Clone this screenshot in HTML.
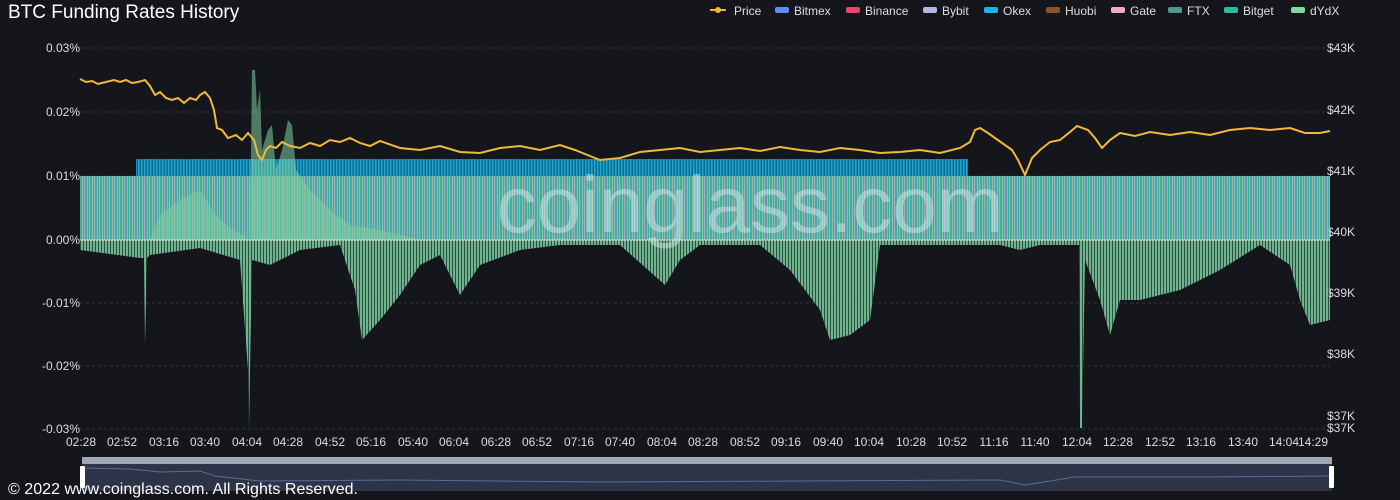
<!DOCTYPE html>
<html><head><style>
html,body{margin:0;padding:0;background:#15161b;width:1400px;height:500px;overflow:hidden;font-family:"Liberation Sans",sans-serif;}
svg{display:block}
</style></head><body>
<svg width="1400" height="500" xmlns="http://www.w3.org/2000/svg" font-family="Liberation Sans, sans-serif">
<defs>
<pattern id="st" width="3" height="10" patternUnits="userSpaceOnUse"><rect width="3" height="10" fill="#2e5a4a"/><rect width="2" height="10" fill="#7fd0a0"/></pattern>
<pattern id="bl" width="3" height="10" patternUnits="userSpaceOnUse"><rect width="3" height="10" fill="#0e6a8c"/><rect width="1.5" height="10" fill="#1aa6d0"/></pattern>
<pattern id="pos" width="5" height="10" patternUnits="userSpaceOnUse"><rect width="5" height="10" fill="#4fbdb0"/><rect x="2" width="1" height="10" fill="#8ad8b0"/><rect x="4" width="1" height="10" fill="#b9b6e0"/></pattern>
</defs>
<rect width="1400" height="500" fill="#15161b"/>
<text x="8" y="18" fill="#fff" font-size="19">BTC Funding Rates History</text>
<g font-size="12" fill="#ddd">
<circle cx="718" cy="10" r="3" fill="#f0b93a"/><rect x="710" y="9" width="16" height="2" fill="#f0b93a"/><text x="734" y="15">Price</text>
<rect x="775" y="7" width="14" height="6" rx="2" fill="#5b8ff0"/><text x="794" y="15">Bitmex</text>
<rect x="846" y="7" width="14" height="6" rx="2" fill="#e8466a"/><text x="865" y="15">Binance</text>
<rect x="923" y="7" width="14" height="6" rx="2" fill="#b8b4e8"/><text x="942" y="15">Bybit</text>
<rect x="984" y="7" width="14" height="6" rx="2" fill="#14b8e8"/><text x="1003" y="15">Okex</text>
<rect x="1046" y="7" width="14" height="6" rx="2" fill="#8a532a"/><text x="1065" y="15">Huobi</text>
<rect x="1111" y="7" width="14" height="6" rx="2" fill="#f0aac8"/><text x="1130" y="15">Gate</text>
<rect x="1168" y="7" width="14" height="6" rx="2" fill="#4e9a8a"/><text x="1187" y="15">FTX</text>
<rect x="1224" y="7" width="14" height="6" rx="2" fill="#20c0a0"/><text x="1243" y="15">Bitget</text>
<rect x="1291" y="7" width="14" height="6" rx="2" fill="#80d8a0"/><text x="1310" y="15">dYdX</text>
</g>
<g stroke="#33343a" stroke-dasharray="3,3" stroke-width="1">
<line x1="80" y1="48" x2="1330" y2="48"/><line x1="80" y1="112" x2="1330" y2="112"/><line x1="80" y1="176" x2="1330" y2="176"/><line x1="80" y1="303" x2="1330" y2="303"/><line x1="80" y1="366" x2="1330" y2="366"/><line x1="80" y1="429" x2="1330" y2="429"/>
</g>
<g font-size="12" fill="#ddd" text-anchor="end">
<text x="80" y="52">0.03%</text><text x="80" y="116">0.02%</text><text x="80" y="180">0.01%</text><text x="80" y="244">0.00%</text><text x="80" y="307">-0.01%</text><text x="80" y="370">-0.02%</text><text x="80" y="433">-0.03%</text>
</g>
<g font-size="12" fill="#ddd">
<text x="1327" y="52">$43K</text><text x="1327" y="114">$42K</text><text x="1327" y="175">$41K</text><text x="1327" y="236">$40K</text><text x="1327" y="297">$39K</text><text x="1327" y="358">$38K</text><text x="1327" y="420">$37K</text><text x="1327" y="432">$37K</text>
</g>
<rect x="136" y="159" width="832" height="17" fill="url(#bl)"/>
<rect x="80" y="176" width="1250" height="64" fill="url(#pos)" opacity="0.9"/>
<path d="M150,240 L160,215 L180,200 L200,190 L215,215 L230,228 L250,240Z" fill="#7fd0a0" opacity="0.5"/>
<path d="M250,240 L252,70 L255,70 L257,110 L260,90 L262,150 L268,130 L272,125 L276,170 L282,150 L288,120 L292,125 L296,170 L310,190 L330,210 L350,225 L380,230 L420,240Z" fill="#7fd0a0" opacity="0.55"/>
<polygon fill="url(#st)" opacity="0.85" points="80,240 80,250 140,258 144,258 145,345 147,258 150,255 200,248 240,260 248,370 249,430 250,370 252,260 270,265 300,250 340,245 355,290 362,340 380,320 400,295 420,265 440,255 460,295 480,265 520,250 560,245 620,245 665,285 680,260 700,245 760,245 790,270 820,310 830,340 850,335 870,320 880,245 1000,245 1020,250 1040,245 1079,245 1080,428 1082,428 1085,260 1100,300 1110,335 1120,300 1140,300 1180,290 1220,270 1260,245 1290,265 1300,300 1310,325 1330,320 1330,240"/>
<line x1="80" y1="240" x2="1330" y2="240" stroke="#ddd" stroke-width="1"/>
<text x="750" y="232" text-anchor="middle" font-size="80" fill="#e0eeee" opacity="0.45">coinglass.com</text>
<polyline fill="none" stroke="#f0b93a" stroke-width="2" points="80,79 86,82 92,81 98,84 106,82 114,80 120,82 126,80 132,83 138,82 145,80 150,86 155,95 160,92 166,98 172,100 178,98 184,103 190,98 196,100 200,95 205,92 210,98 214,110 217,128 222,130 228,138 236,135 242,140 248,133 254,140 258,155 262,160 266,150 270,146 276,148 282,142 290,146 300,148 310,143 320,146 330,140 340,142 350,138 360,143 370,146 380,141 400,148 420,150 440,146 460,152 480,153 500,148 520,146 540,150 560,145 575,150 590,156 600,160 620,158 640,152 660,150 680,148 700,152 720,150 740,148 760,151 780,147 800,150 820,152 840,148 860,150 880,153 900,152 920,150 940,153 960,148 970,142 975,130 980,128 988,133 995,138 1005,145 1012,150 1018,160 1025,175 1032,158 1040,150 1050,142 1060,140 1070,132 1077,126 1088,130 1095,138 1102,148 1110,140 1120,133 1135,136 1150,132 1170,135 1190,132 1210,135 1230,130 1250,128 1270,130 1290,128 1305,133 1320,133 1330,131"/>
<g font-size="12" fill="#ddd" text-anchor="middle">
<text x="81" y="446">02:28</text><text x="122" y="446">02:52</text><text x="164" y="446">03:16</text><text x="205" y="446">03:40</text><text x="247" y="446">04:04</text><text x="288" y="446">04:28</text><text x="330" y="446">04:52</text><text x="371" y="446">05:16</text><text x="413" y="446">05:40</text><text x="454" y="446">06:04</text><text x="496" y="446">06:28</text><text x="537" y="446">06:52</text><text x="579" y="446">07:16</text><text x="620" y="446">07:40</text><text x="662" y="446">08:04</text><text x="703" y="446">08:28</text><text x="745" y="446">08:52</text><text x="786" y="446">09:16</text><text x="828" y="446">09:40</text><text x="869" y="446">10:04</text><text x="911" y="446">10:28</text><text x="952" y="446">10:52</text><text x="994" y="446">11:16</text><text x="1035" y="446">11:40</text><text x="1077" y="446">12:04</text><text x="1118" y="446">12:28</text><text x="1160" y="446">12:52</text><text x="1201" y="446">13:16</text><text x="1243" y="446">13:40</text><text x="1284" y="446">14:04</text><text x="1313" y="446">14:29</text>
</g>
<rect x="82" y="457" width="1250" height="7" fill="#a0a6b4"/>
<rect x="82" y="464" width="1250" height="27" fill="#2d3447"/>
<polyline fill="none" stroke="#5a6a9a" stroke-width="1" points="82,468 130,469 160,472 200,471 215,476 260,481 400,480 600,482 800,481 1000,480 1025,485 1075,477 1200,477 1332,476"/>
<rect x="80" y="466" width="5" height="22" rx="1" fill="#fff"/><rect x="1329" y="466" width="5" height="22" rx="1" fill="#fff"/>
<text x="8" y="494" fill="#fff" font-size="16" textLength="350">© 2022 www.coinglass.com. All Rights Reserved.</text>
</svg>
</body></html>
